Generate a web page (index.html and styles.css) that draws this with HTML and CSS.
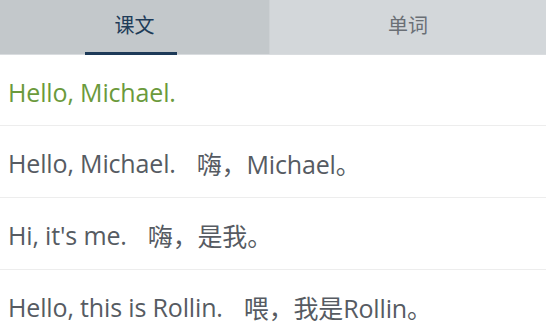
FILE: index.html
```html
<!DOCTYPE html>
<html lang="zh">
<head>
<meta charset="utf-8">
<link rel="stylesheet" href="styles.css">
</head>
<body>
<div class="tabs">
  <div class="tab active"><span class="label">课文</span><span class="bar"></span></div>
  <div class="tab"><span class="label">单词</span></div>
</div>
<div class="list">
  <div class="row title">Hello, Michael.</div>
  <div class="row"><span class="en">Hello, Michael.</span><span class="zh">嗨，Michael。</span></div>
  <div class="row"><span class="en">Hi, it's me.</span><span class="zh">嗨，是我。</span></div>
  <div class="row"><span class="en">Hello, this is Rollin.</span><span class="zh">喂，我是Rollin。</span></div>
</div>
</body>
</html>
```
FILE: styles.css
```css
* { box-sizing: border-box; }
html, body { margin: 0; padding: 0; background: #ffffff; }
body {
  width: 546px;
  height: 336px;
  overflow: hidden;
  font-family: "Open Sans", "Noto Sans CJK SC", sans-serif;
}
.tabs {
  display: flex;
  height: 55px;
  border-bottom: 1px solid #d9dcdf;
}
.tab {
  flex: 1;
  display: flex;
  justify-content: center;
  align-items: center;
  position: relative;
  background: #d3d7da;
  color: #6a6f75;
  font-family: "Noto Sans CJK SC", sans-serif;
  font-size: 20px;
  padding-bottom: 6px;
}
.tab.active {
  flex: 0 0 270px;
  background: #c3c8cb;
  color: #1e3b58;
  border-right: 1px solid #cdd1d4;
}
.bar {
  position: absolute;
  left: 85px;
  width: 92px;
  bottom: -1px;
  height: 3px;
  background: #1d3a58;
}
.list { display: flex; flex-direction: column; }
.row {
  height: 72px;
  display: flex;
  align-items: center;
  padding-left: 8px;
  padding-top: 3px;
  border-bottom: 1px solid #ededed;
  font-size: 25px;
  letter-spacing: -0.15px;
  color: #565b62;
}
.row.title { height: 71px; color: #6b9a3c; }
.zh { margin-left: 21px; }
```
